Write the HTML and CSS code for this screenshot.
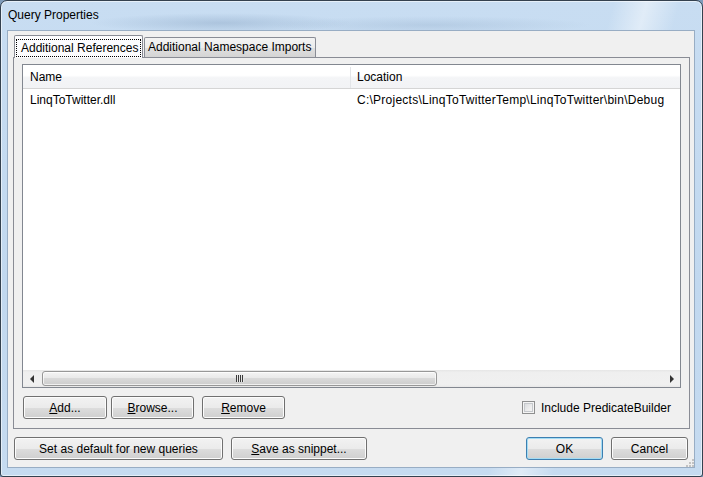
FILE: index.html
```html
<!DOCTYPE html>
<html lang="en">

<head>
    <meta charset="UTF-8">
    <title>Query Properties</title>
    <link rel="stylesheet" href="styles.css">
</head>

<body>
    <div class="window">
        <div class="titlebar">Query Properties</div>

        <div class="client">
            <!-- tab headers -->
            <div class="tabs">
                <div class="tab active"><span class="focus">Additional References</span></div>
                <div class="tab">Additional Namespace Imports</div>
            </div>

            <div class="panel">
                <div class="listview">
                    <div class="lv-header">
                        <div class="col col-name">Name</div>
                        <div class="col col-loc">Location</div>
                    </div>
                    <div class="lv-body">
                        <div class="lv-row">
                            <div class="col col-name">LinqToTwitter.dll</div>
                            <div class="col col-loc path">C:\Projects\LinqToTwitterTemp\LinqToTwitter\bin\Debug</div>
                        </div>
                    </div>
                    <div class="hscroll">
                        <div class="arrow arrow-left"></div>
                        <div class="track">
                            <div class="thumb"><span class="grip"></span></div>
                        </div>
                        <div class="arrow arrow-right"></div>
                    </div>
                </div>

                <div class="panel-buttons">
                    <button class="btn btn-add"><u>A</u>dd...</button>
                    <button class="btn btn-browse"><u>B</u>rowse...</button>
                    <button class="btn btn-remove"><u>R</u>emove</button>
                    <label class="check"><span class="box"></span>Include PredicateBuilder</label>
                </div>
            </div>

            <div class="dialog-buttons">
                <button class="btn btn-default">Set as default for new queries</button>
                <button class="btn btn-snippet"><u>S</u>ave as snippet...</button>
                <button class="btn btn-ok">OK</button>
                <button class="btn btn-cancel">Cancel</button>
            </div>

            <!-- size grip -->
            <svg class="sizegrip" width="10" height="10" viewBox="0 0 10 10">
                <rect x="8" y="2" width="2" height="2" fill="#c3c3c3"></rect>
                <rect x="8" y="5" width="2" height="2" fill="#c3c3c3"></rect>
                <rect x="5" y="5" width="2" height="2" fill="#c3c3c3"></rect>
                <rect x="8" y="8" width="2" height="2" fill="#c3c3c3"></rect>
                <rect x="5" y="8" width="2" height="2" fill="#c3c3c3"></rect>
                <rect x="2" y="8" width="2" height="2" fill="#c3c3c3"></rect>
            </svg>
        </div>
    </div>
</body>

</html>
```

FILE: styles.css
```css
* {
    box-sizing: border-box;
}

html,
body {
    margin: 0;
    padding: 0;
}

body {
    width: 703px;
    height: 477px;
    overflow: hidden;
    font-family: "Liberation Sans", Arial, sans-serif;
    font-size: 12px;
    color: #000;
    background: #7f9cbb;
}

.window {
    width: 703px;
    height: 477px;
    border: 1px solid #34414f;
    border-radius: 7px 7px 3px 3px;
    padding: 0 7px 8px 6px;
    display: flex;
    flex-direction: column;
    background:
        linear-gradient(105deg, rgba(255, 255, 255, 0) 74%, rgba(255, 255, 255, 0.45) 78%, rgba(255, 255, 255, 0) 82%),
        radial-gradient(ellipse 130px 10px at 220px 22px, rgba(110, 140, 175, 0.3), rgba(110, 140, 175, 0)),
        radial-gradient(ellipse 160px 9px at 430px 24px, rgba(110, 140, 175, 0.2), rgba(110, 140, 175, 0)),
        linear-gradient(180deg, #c8ddf2 0%, #c1d8ef 60%, #c6dbf0 100%);
    box-shadow: inset 0 0 0 1px rgba(255, 255, 255, 0.55);
}

.titlebar {
    height: 29px;
    line-height: 29px;
    padding-left: 1px;
}

.client {
    position: relative;
    flex: 1;
    border: 1px solid #98adc4;
    background-color: #f0f0f0;
    display: flex;
    flex-direction: column;
    padding: 4px 4px 0 5px;
}

/* tabs */
.tabs {
    display: flex;
    align-items: flex-end;
    height: 22px;
    padding-left: 1px;
    position: relative;
    z-index: 1;
}

.tab {
    width: 172px;
    height: 20px;
    line-height: 19px;
    border: 1px solid #898c95;
    border-bottom: none;
    border-radius: 2px 2px 0 0;
    padding: 0 0 0 3px;
    margin-left: 1px;
    white-space: nowrap;
    overflow: hidden;
    background: linear-gradient(#f3f3f3 0%, #ececec 50%, #e0e0e0 51%, #d4d4d4 100%);
}

.tab.active {
    width: 129px;
    height: 23px;
    margin-bottom: -1px;
    margin-left: 0;
    padding: 3px 1px 0;
    background: #fcfcfe;
}

.focus {
    display: block;
    height: 18px;
    line-height: 16px;
    border: 1px dotted #000;
    padding: 0 0 0 4px;
}

.panel {
    border: 1px solid #898c95;
    padding: 6px 8px 9px 8px;
}

/* list view */
.listview {
    height: 324px;
    border: 1px solid #828790;
    background-color: #fff;
    display: flex;
    flex-direction: column;
}

.lv-header {
    display: flex;
    height: 24px;
    padding-top: 2px;
    line-height: 21px;
    border-bottom: 1px solid #d5d5d5;
    background: linear-gradient(#ffffff 0%, #ffffff 45%, #f4f5f7 55%, #f2f3f5 100%);
}

.col {
    white-space: nowrap;
}

.col-name {
    width: 327px;
    padding-left: 7px;
}

.col-loc {
    padding-left: 6px;
    border-left: 1px solid transparent;
}

.lv-header .col-loc {
    border-left-color: #e3e5e8;
}

.path {
    letter-spacing: 0.25px;
}

.lv-body {
    flex: 1;
}

.lv-row {
    display: flex;
    height: 20px;
    line-height: 20px;
    margin-top: 1px;
}

/* horizontal scrollbar */
.hscroll {
    display: flex;
    height: 17px;
    background: linear-gradient(#e6e6e6 0%, #efefef 15%, #f0f0f0 85%, #e8e8e8 100%);
}

.arrow {
    width: 17px;
    display: flex;
    align-items: center;
    justify-content: center;
}

.arrow-left::before,
.arrow-right::before {
    content: "";
    width: 0;
    height: 0;
    border-top: 4px solid transparent;
    border-bottom: 4px solid transparent;
}

.arrow-left::before {
    border-right: 4px solid #333;
}

.arrow-right::before {
    border-left: 4px solid #333;
}

.track {
    flex: 1;
    padding: 1px 0;
}

.thumb {
    width: 395px;
    height: 15px;
    margin-left: 2px;
    border: 1px solid #979797;
    border-radius: 3px;
    background: linear-gradient(#f4f4f4 0%, #e9e9e9 45%, #d9d9d9 50%, #cdcdcd 100%);
    box-shadow: inset 0 0 0 1px rgba(255, 255, 255, 0.7);
    display: flex;
    align-items: center;
    justify-content: center;
}

.grip {
    width: 8px;
    height: 7px;
    background: repeating-linear-gradient(90deg, #3b3b3b 0, #3b3b3b 1px, #e8e8e8 1px, #e8e8e8 2px);
}

/* buttons */
.panel-buttons {
    display: flex;
    align-items: center;
    margin-top: 8px;
    padding-left: 1px;
}

.btn {
    height: 23px;
    padding: 0;
    border: 1px solid #707070;
    border-radius: 3px;
    background: linear-gradient(#f2f2f2 0%, #ebebeb 50%, #dddddd 51%, #cfcfcf 100%);
    box-shadow: inset 0 0 0 1px #fcfcfc;
    font-family: inherit;
    font-size: 12px;
    color: #000;
}

.btn-add {
    width: 84px;
}

.btn-browse {
    width: 83px;
    margin-left: 4px;
}

.btn-remove {
    width: 83px;
    margin-left: 8px;
}

.check {
    display: flex;
    align-items: center;
    margin-left: auto;
    margin-right: 10px;
}

.box {
    width: 13px;
    height: 13px;
    margin-right: 6px;
    border: 1px solid #8e8f8f;
    background: linear-gradient(135deg, #d2d5d9 0%, #eeeeee 60%, #f7f7f7 100%);
    box-shadow: inset 0 0 0 1px #f4f4f4, inset 0 0 0 2px #c5c8cc;
}

.dialog-buttons {
    display: flex;
    margin-top: 8px;
    padding: 0 2px 0 1px;
}

.btn-default {
    width: 209px;
}

.btn-snippet {
    width: 136px;
    margin-left: 8px;
}

.btn-ok {
    width: 77px;
    margin-left: auto;
    border-color: #3c7fb1;
    box-shadow: inset 0 0 0 1px #a4dcf4;
}

.btn-cancel {
    width: 77px;
    margin-left: 8px;
}

.sizegrip {
    position: absolute;
    right: 0;
    bottom: 0;
}
```
